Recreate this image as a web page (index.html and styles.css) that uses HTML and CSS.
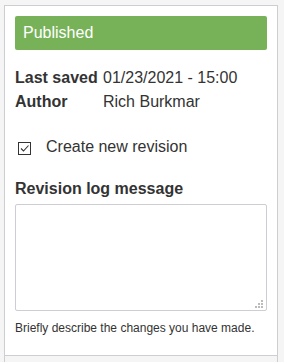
FILE: index.html
```html
<!DOCTYPE html>
<html lang="en">

<head>
    <meta charset="UTF-8">
    <meta name="viewport" content="width=device-width, initial-scale=1.0">
    <title>Entity meta</title>
    <link rel="stylesheet" href="styles.css">
</head>

<body>
    <div class="entity-meta">
        <div class="meta-main">
            <div class="status">Published</div>

            <div class="meta-info">
                <span class="label">Last saved</span>
                <span class="value">01/23/2021 - 15:00</span>
                <span class="label">Author</span>
                <span class="value">Rich Burkmar</span>
            </div>

            <label class="check-row">
                <svg class="check-box" width="13" height="13" viewBox="0 0 13 13">
                    <rect x="0.5" y="0.5" width="12" height="12" fill="#fff" stroke="#333" />
                    <path d="M3 6.5 L5.5 9 L10.5 3.5" fill="none" stroke="#333" stroke-width="1.1" />
                </svg>
                <span>Create new revision</span>
            </label>

            <div class="field">
                <label class="field-label" for="revision-log">Revision log message</label>
                <div class="textarea-wrap">
                    <textarea id="revision-log"></textarea>
                    <!-- resize grip -->
                    <svg class="grip" width="8" height="8" viewBox="0 0 8 8">
                        <rect x="6" y="0" width="2" height="2" fill="#bbb" />
                        <rect x="3" y="3" width="2" height="2" fill="#bbb" />
                        <rect x="6" y="3" width="2" height="2" fill="#bbb" />
                        <rect x="0" y="6" width="2" height="2" fill="#bbb" />
                        <rect x="3" y="6" width="2" height="2" fill="#bbb" />
                        <rect x="6" y="6" width="2" height="2" fill="#bbb" />
                    </svg>
                </div>
                <p class="description">Briefly describe the changes you have made.</p>
            </div>
        </div>
        <div class="meta-next"></div>
    </div>
</body>

</html>
```

FILE: styles.css
```css
* {
    margin: 0;
    padding: 0;
    box-sizing: border-box;
}

body {
    background-color: #f5f5f5;
    font-family: "Liberation Sans", Arial, sans-serif;
    color: #333;
    padding: 5px 0 0 4px;
}

.entity-meta {
    width: 274px;
    border: 1px solid #cdcdd4;
    border-bottom: none;
}

.meta-main {
    background-color: #fff;
    padding: 10px 10px 18px;
    border-bottom: 1px solid #cdcdd4;
}

.status {
    background-color: #77b259;
    color: #fff;
    font-size: 16px;
    line-height: 18px;
    padding: 8px;
    border-radius: 2px;
}

.meta-info {
    display: grid;
    grid-template-columns: 88px 1fr;
    margin-top: 16px;
    font-size: 16px;
    line-height: 24px;
}

.meta-info .label {
    font-weight: bold;
}

.check-row {
    display: flex;
    align-items: center;
    margin-top: 21px;
    padding-left: 3px;
    font-size: 16px;
    line-height: 24px;
}

.check-box {
    margin: 2px 15px 0 0;
}

.field {
    margin-top: 20px;
}

.field-label {
    display: block;
    font-weight: bold;
    font-size: 16px;
    line-height: 20px;
}

.textarea-wrap {
    position: relative;
    margin-top: 5px;
}

textarea {
    display: block;
    width: 100%;
    height: 107px;
    border: 1px solid #cdcdd4;
    border-radius: 2px;
    resize: none;
    font-family: inherit;
}

.grip {
    position: absolute;
    right: 4px;
    bottom: 3px;
}

.description {
    margin-top: 8px;
    font-size: 12px;
    line-height: 18px;
}

.meta-next {
    height: 20px;
    background-color: #f5f5f5;
}
```
